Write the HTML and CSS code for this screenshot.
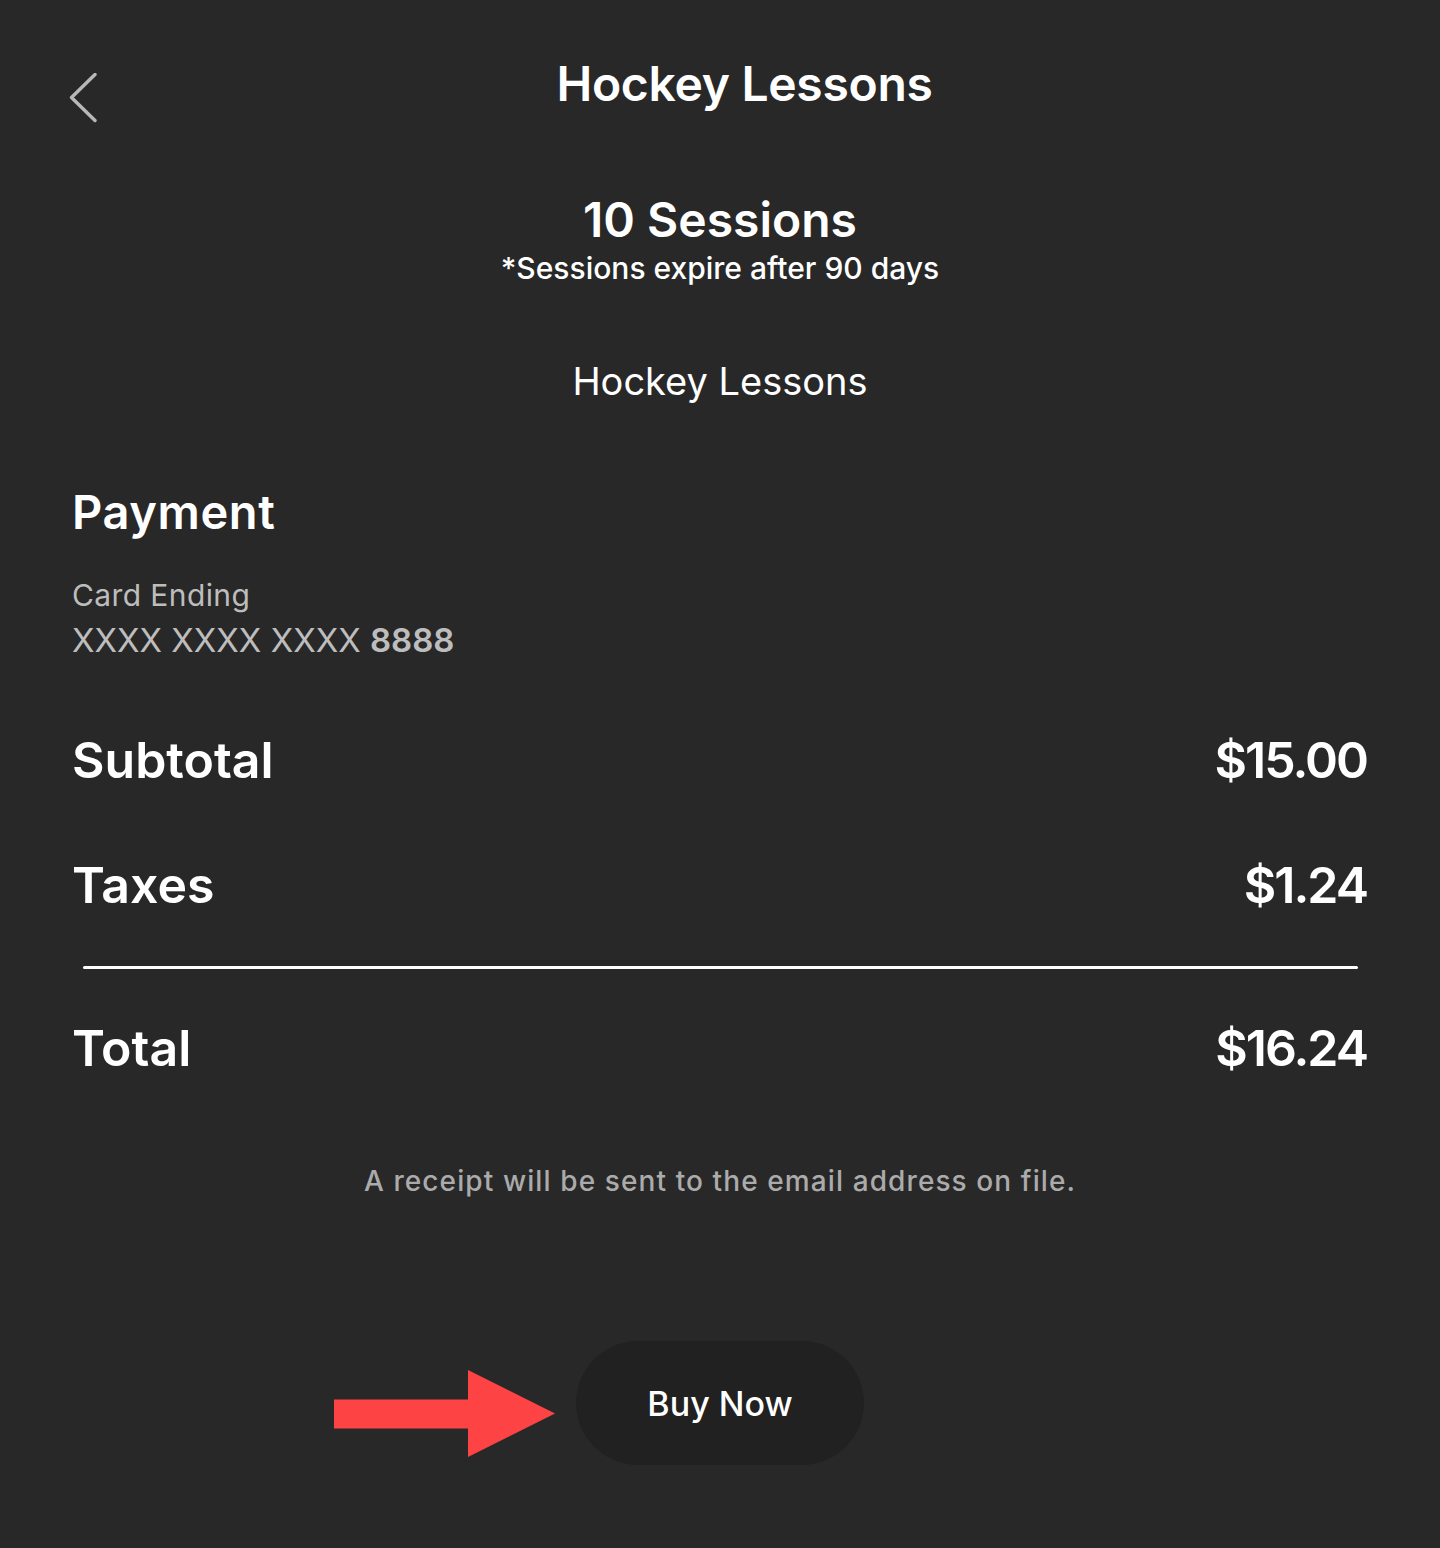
FILE: index.html
```html
<!DOCTYPE html>
<html lang="en">
<head>
  <meta charset="UTF-8">
  <title>Hockey Lessons - Checkout</title>
  <link rel="stylesheet" href="styles.css">
</head>
<body>
  <div class="page">
    <header class="topbar">
      <a class="back" href="#" aria-label="Back">
        <svg width="30" height="50" viewBox="0 0 30 50">
          <path d="M26 1.5 L2.5 24.5 L26 47.5" fill="none" stroke="#b8b8b8" stroke-width="3.4" stroke-linecap="round" stroke-linejoin="round"/>
        </svg>
      </a>
      <h1 class="title">Hockey Lessons</h1>
    </header>

    <!-- Package summary -->
    <section class="package">
      <h2 class="package-name">10 Sessions</h2>
      <p class="package-note">*Sessions expire after 90 days</p>
      <p class="package-service">Hockey Lessons</p>
    </section>

    <!-- Payment -->
    <section class="payment">
      <h2 class="section-title">Payment</h2>
      <p class="card-label">Card Ending</p>
      <p class="card-number">XXXX XXXX XXXX <b>8888</b></p>
    </section>

    <section class="totals">
      <div class="row row-subtotal">
        <span>Subtotal</span>
        <span class="amount">$15.00</span>
      </div>
      <div class="row row-taxes">
        <span>Taxes</span>
        <span class="amount">$1.24</span>
      </div>
      <hr class="divider">
      <div class="row row-total">
        <span>Total</span>
        <span class="amount">$16.24</span>
      </div>
    </section>

    <p class="receipt">A receipt will be sent to the email address on file.</p>

    <div class="actions">
      <div class="buy-wrap">
        <svg class="pointer" width="222" height="88" viewBox="0 0 222 88">
          <polygon points="0,29.5 134,29.5 134,0 221,43.5 134,87 134,58.5 0,58.5" fill="#fd4343"/>
        </svg>
        <button class="buy" type="button">Buy Now</button>
      </div>
    </div>
  </div>
</body>
</html>
```

FILE: styles.css
```css
/* Base */
html, body {
  margin: 0;
  background-color: #282828;
  font-family: Inter, "Noto Sans", sans-serif;
  color: #fff;
}

.page {
  height: 1548px;
  padding: 60px 72px 0;
  box-sizing: border-box;
}

h1, h2, p {
  margin: 0;
  line-height: 1;
}

/* Header */
.topbar {
  display: flex;
  align-items: flex-start;
  height: 48px;
  margin-left: -3px;
  margin-right: -22px;
}

.back {
  display: block;
  width: 30px;
  height: 50px;
  margin-top: 13px;
}

.title {
  flex: 1;
  text-align: center;
  font-size: 48px;
  font-weight: 600;
  letter-spacing: -0.3px;
}

/* Package */
.package {
  text-align: center;
  margin-top: 88px;
}

.package-name {
  font-size: 48px;
  font-weight: 600;
}

.package-note {
  margin-top: 9px;
  font-size: 30px;
  font-weight: 500;
}

.package-service {
  margin-top: 79px;
  font-size: 38px;
  font-weight: 400;
}

/* Payment */
.payment {
  margin-top: 88px;
}

.section-title {
  font-size: 47px;
  font-weight: 600;
  letter-spacing: 0.6px;
}

.card-label {
  margin-top: 45px;
  font-size: 30px;
  color: #bdbdbd;
  letter-spacing: 0.4px;
}

.card-number {
  margin-top: 14px;
  font-size: 33px;
  color: #bdbdbd;
}

.card-number b {
  font-weight: 600;
}

/* Totals */
.totals {
  margin-top: 78px;
}

.row {
  display: flex;
  justify-content: space-between;
  font-size: 50px;
  font-weight: 600;
  line-height: 1;
}

.amount {
  letter-spacing: -2px;
  margin-right: 1px;
}

.row-taxes {
  margin-top: 75px;
}

.divider {
  height: 3px;
  margin: 56px 10px 0 11px;
  border: none;
  border-radius: 3px;
  background-color: #fff;
}

.row-total {
  margin-top: 54px;
}

.receipt {
  margin-top: 94px;
  text-align: center;
  font-size: 28px;
  font-weight: 500;
  letter-spacing: 1.1px;
  color: #ababab;
}

/* Buy button */
.actions {
  display: flex;
  justify-content: center;
  margin-top: 146px;
}

.buy-wrap {
  position: relative;
}

.buy {
  width: 288px;
  height: 124px;
  border: none;
  border-radius: 62px;
  background-color: #212121;
  color: #fff;
  font-family: inherit;
  font-size: 34px;
  font-weight: 500;
  cursor: pointer;
}

.pointer {
  position: absolute;
  left: -242px;
  top: 29px;
}
```
